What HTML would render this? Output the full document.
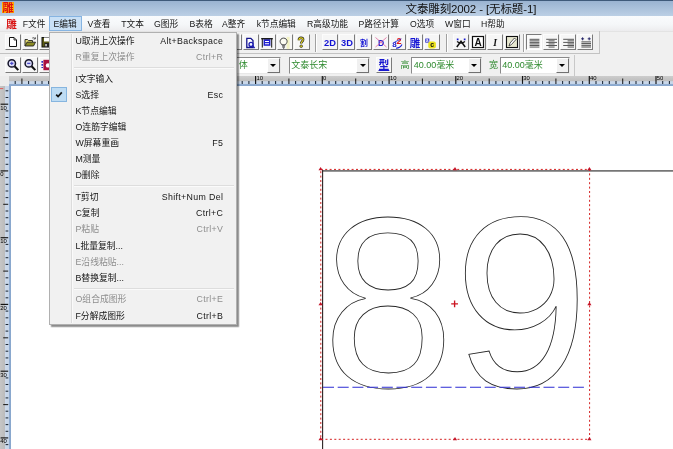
<!DOCTYPE html>
<html lang="zh-CN"><head><meta charset="utf-8"><title>文泰雕刻2002 - [无标题-1]</title>
<style>
html,body{margin:0;padding:0}
body{width:673px;height:449px;overflow:hidden;background:#fff;position:relative;font-family:"Liberation Sans","Noto Sans CJK SC",sans-serif;font-size:9px;color:#000;line-height:1}
div,span,svg{position:absolute;box-sizing:border-box}
.t{white-space:nowrap}
#title{left:0;top:0;width:673px;height:16px;background:linear-gradient(#9ab3d1 0,#a9c0da 45%,#bbcfe5 100%);border-top:1px solid #3f5a7a}
#title .cap{left:405.5px;top:1px;font-size:11.5px;line-height:15px;color:#111;letter-spacing:-0.12px}
#appico{left:2.2px;top:0.8px;width:11.6px;height:11.6px;background:radial-gradient(circle at 50% 50%,#ffd838 0,#ffb400 60%,#ff9c00 100%);color:#e01010;font-size:11px;line-height:12px;text-align:center;font-weight:bold;overflow:hidden}
#menubar{left:0;top:16px;width:673px;height:15.4px;background:linear-gradient(#f9fbfd 0,#f5f7f9 55%,#ececee 100%)}
#menubar .mi{top:1px;height:15px;line-height:15px;font-size:8.7px;color:#161616}
#menubar .hl{left:49.4px;top:0;width:32.8px;height:15px;background:#c9e0f6;border:1px solid #86b4e2}
#tb1{left:0;top:31px;width:673px;height:24px;background:#f0f0f0;border-top:1px solid #e3e3e3}
#tb2{left:0;top:55px;width:673px;height:21px;background:#f0f0f0}
.btn{width:16px;height:16px;border-right:1px solid #7b7b7b;border-bottom:1px solid #7b7b7b;border-top:1px solid #fcfcfc;border-left:1px solid #fcfcfc;background:#f6f6f6}
.btn.down{border-left:1px solid #7b7b7b;border-top:1px solid #7b7b7b;border-right:1px solid #fff;border-bottom:1px solid #fff;background:#fafafa}
.btn svg{left:0;top:0}
.sep{width:2px;border-left:1px solid #a0a0a0;border-right:1px solid #fff}
.combo{height:17px;background:#fff;border:1px solid #8a8a8a;border-right-color:#e8e8e8;border-bottom-color:#e8e8e8;color:#2e8a2e;font-size:9px;line-height:15px}
.combo .dd{right:0;top:0;width:13px;height:15px;background:#f0f0f0;border:1px solid #fff;border-right-color:#707070;border-bottom-color:#707070}
.combo .dd i{position:absolute;left:2.5px;top:5px;width:0;height:0;border-left:3px solid transparent;border-right:3px solid transparent;border-top:3.5px solid #000}
.combo .tx{left:1.8px;top:0}
.lbl{color:#2e8a2e;font-size:9px;line-height:17px}
#menu{left:49px;top:32px;width:188px;height:293px;background:#f1f1f1;border:1px solid #b0b0b0;box-shadow:2px 2px 1.2px rgba(0,0,0,.45)}
#menu .gut{left:21.2px;top:1px;width:1px;height:289px;background:#dcdcdc;border-right:1px solid #fafafa;width:2px}
#menu .it{left:25.5px;width:147.5px;height:16px;line-height:16px;font-size:8.8px;color:#161616}
#menu .it.dis{color:#8e8e8e}
#menu .it .sc{right:-0.3px;top:0;letter-spacing:0.36px}
#menu .it .lb{left:0;top:0}
#menu .ms{left:24px;width:160px;background:#dddddd;border-bottom:1px solid #fafafa;height:2px}
#menu .chk{left:1px;top:53.9px;width:16.4px;height:15.6px;background:#bedcf3;border:1px solid #86b5df}
#root{left:0;top:0;width:673px;height:449px;overflow:hidden;will-change:transform;background:#fff}
</style></head><body><div id="root">

<svg id="cv" width="673" height="449" viewBox="0 0 673 449" style="left:0;top:0">
<line x1="322" y1="170.8" x2="673" y2="170.8" stroke="#767676" stroke-width="1.7"/>
<line x1="322.6" y1="170" x2="322.6" y2="449" stroke="#2a2222" stroke-width="1.1"/>
<g font-family='"Liberation Sans",sans-serif' font-size="240" fill="none" stroke="#262626" stroke-width="0.85"><text transform="translate(322.55 386.8) scale(0.985 1.017)" x="0" y="0">8</text><text transform="translate(453.9 386.8) scale(1.009 1.017)" x="0" y="0">9</text></g>
<line x1="323" y1="387.2" x2="584" y2="387.2" stroke="#2c2cd4" stroke-width="1.1" stroke-dasharray="11 3.7"/>
<rect x="320.8" y="169.4" width="268.8" height="269.9" fill="none" stroke="#d42020" stroke-width="1" stroke-dasharray="2 2.4"/>
<path d="M320.6 167.1 l2.1 3.2 h-4.2 z" fill="#c41428"/>
<path d="M455 167.1 l2.1 3.2 h-4.2 z" fill="#c41428"/>
<path d="M589.4 167.1 l2.1 3.2 h-4.2 z" fill="#c41428"/>
<path d="M320.6 302.05 l2.1 3.2 h-4.2 z" fill="#c41428"/>
<path d="M589.4 302.05 l2.1 3.2 h-4.2 z" fill="#c41428"/>
<path d="M320.6 437 l2.1 3.2 h-4.2 z" fill="#c41428"/>
<path d="M455 437 l2.1 3.2 h-4.2 z" fill="#c41428"/>
<path d="M589.4 437 l2.1 3.2 h-4.2 z" fill="#c41428"/>
<path d="M451.2 303.9h6.8M454.6 300.5v6.8" stroke="#cc1420" stroke-width="1.35" fill="none"/>
</svg>
<div id="hr" style="left:9px;top:75px;width:664px;height:11.3px;background:linear-gradient(#cdcdcd 0,#bebebe 52%,#ccd9ea 56%,#c6d5e8 76%,#92aed2 82%,#86a5cc 100%);border-top:1px solid #e4e4e4"></div>
<div id="vr" style="left:0;top:86.3px;width:10.7px;height:363px;background:linear-gradient(90deg,#c6c6c6 0,#bcbcbc 42%,#ccd9ea 46%,#c6d5e8 78%,#92aed2 84%,#86a5cc 100%)"></div>
<div style="left:0;top:75px;width:9px;height:11.3px;background:#ececec"></div>
<svg width="673" height="449" viewBox="0 0 673 449" style="left:0;top:0" font-family='"Liberation Sans",sans-serif' font-size="6.6" fill="#111">
<line x1="15.2" y1="81.1" x2="15.2" y2="84" stroke="#1e2834" stroke-width="1.05"/>
<line x1="21.9" y1="78.6" x2="21.9" y2="83.9" stroke="#1c1c1c" stroke-width="1.05"/>
<line x1="28.6" y1="81.1" x2="28.6" y2="84" stroke="#1e2834" stroke-width="1.05"/>
<line x1="35.3" y1="81.1" x2="35.3" y2="84" stroke="#1e2834" stroke-width="1.05"/>
<line x1="42.0" y1="81.1" x2="42.0" y2="84" stroke="#1e2834" stroke-width="1.05"/>
<line x1="48.6" y1="81.1" x2="48.6" y2="84" stroke="#1e2834" stroke-width="1.05"/>
<line x1="55.3" y1="75.9" x2="55.3" y2="83.9" stroke="#141414" stroke-width="1.15"/>
<text x="56.1" y="80.2" font-size="5.9" fill="#000">40</text>
<line x1="62.0" y1="81.1" x2="62.0" y2="84" stroke="#1e2834" stroke-width="1.05"/>
<line x1="68.7" y1="81.1" x2="68.7" y2="84" stroke="#1e2834" stroke-width="1.05"/>
<line x1="75.3" y1="81.1" x2="75.3" y2="84" stroke="#1e2834" stroke-width="1.05"/>
<line x1="82.0" y1="81.1" x2="82.0" y2="84" stroke="#1e2834" stroke-width="1.05"/>
<line x1="88.7" y1="78.6" x2="88.7" y2="83.9" stroke="#1c1c1c" stroke-width="1.05"/>
<line x1="95.4" y1="81.1" x2="95.4" y2="84" stroke="#1e2834" stroke-width="1.05"/>
<line x1="102.0" y1="81.1" x2="102.0" y2="84" stroke="#1e2834" stroke-width="1.05"/>
<line x1="108.7" y1="81.1" x2="108.7" y2="84" stroke="#1e2834" stroke-width="1.05"/>
<line x1="115.4" y1="81.1" x2="115.4" y2="84" stroke="#1e2834" stroke-width="1.05"/>
<line x1="122.1" y1="75.9" x2="122.1" y2="83.9" stroke="#141414" stroke-width="1.15"/>
<text x="122.9" y="80.2" font-size="5.9" fill="#000">30</text>
<line x1="128.7" y1="81.1" x2="128.7" y2="84" stroke="#1e2834" stroke-width="1.05"/>
<line x1="135.4" y1="81.1" x2="135.4" y2="84" stroke="#1e2834" stroke-width="1.05"/>
<line x1="142.1" y1="81.1" x2="142.1" y2="84" stroke="#1e2834" stroke-width="1.05"/>
<line x1="148.8" y1="81.1" x2="148.8" y2="84" stroke="#1e2834" stroke-width="1.05"/>
<line x1="155.4" y1="78.6" x2="155.4" y2="83.9" stroke="#1c1c1c" stroke-width="1.05"/>
<line x1="162.1" y1="81.1" x2="162.1" y2="84" stroke="#1e2834" stroke-width="1.05"/>
<line x1="168.8" y1="81.1" x2="168.8" y2="84" stroke="#1e2834" stroke-width="1.05"/>
<line x1="175.5" y1="81.1" x2="175.5" y2="84" stroke="#1e2834" stroke-width="1.05"/>
<line x1="182.1" y1="81.1" x2="182.1" y2="84" stroke="#1e2834" stroke-width="1.05"/>
<line x1="188.8" y1="75.9" x2="188.8" y2="83.9" stroke="#141414" stroke-width="1.15"/>
<text x="189.6" y="80.2" font-size="5.9" fill="#000">20</text>
<line x1="195.5" y1="81.1" x2="195.5" y2="84" stroke="#1e2834" stroke-width="1.05"/>
<line x1="202.2" y1="81.1" x2="202.2" y2="84" stroke="#1e2834" stroke-width="1.05"/>
<line x1="208.8" y1="81.1" x2="208.8" y2="84" stroke="#1e2834" stroke-width="1.05"/>
<line x1="215.5" y1="81.1" x2="215.5" y2="84" stroke="#1e2834" stroke-width="1.05"/>
<line x1="222.2" y1="78.6" x2="222.2" y2="83.9" stroke="#1c1c1c" stroke-width="1.05"/>
<line x1="228.9" y1="81.1" x2="228.9" y2="84" stroke="#1e2834" stroke-width="1.05"/>
<line x1="235.5" y1="81.1" x2="235.5" y2="84" stroke="#1e2834" stroke-width="1.05"/>
<line x1="242.2" y1="81.1" x2="242.2" y2="84" stroke="#1e2834" stroke-width="1.05"/>
<line x1="248.9" y1="81.1" x2="248.9" y2="84" stroke="#1e2834" stroke-width="1.05"/>
<line x1="255.6" y1="75.9" x2="255.6" y2="83.9" stroke="#141414" stroke-width="1.15"/>
<text x="256.4" y="80.2" font-size="5.9" fill="#000">10</text>
<line x1="262.2" y1="81.1" x2="262.2" y2="84" stroke="#1e2834" stroke-width="1.05"/>
<line x1="268.9" y1="81.1" x2="268.9" y2="84" stroke="#1e2834" stroke-width="1.05"/>
<line x1="275.6" y1="81.1" x2="275.6" y2="84" stroke="#1e2834" stroke-width="1.05"/>
<line x1="282.2" y1="81.1" x2="282.2" y2="84" stroke="#1e2834" stroke-width="1.05"/>
<line x1="288.9" y1="78.6" x2="288.9" y2="83.9" stroke="#1c1c1c" stroke-width="1.05"/>
<line x1="295.6" y1="81.1" x2="295.6" y2="84" stroke="#1e2834" stroke-width="1.05"/>
<line x1="302.3" y1="81.1" x2="302.3" y2="84" stroke="#1e2834" stroke-width="1.05"/>
<line x1="308.9" y1="81.1" x2="308.9" y2="84" stroke="#1e2834" stroke-width="1.05"/>
<line x1="315.6" y1="81.1" x2="315.6" y2="84" stroke="#1e2834" stroke-width="1.05"/>
<line x1="322.3" y1="75.9" x2="322.3" y2="83.9" stroke="#141414" stroke-width="1.15"/>
<text x="323.1" y="80.2" font-size="5.9" fill="#000">0</text>
<line x1="329.0" y1="81.1" x2="329.0" y2="84" stroke="#1e2834" stroke-width="1.05"/>
<line x1="335.7" y1="81.1" x2="335.7" y2="84" stroke="#1e2834" stroke-width="1.05"/>
<line x1="342.3" y1="81.1" x2="342.3" y2="84" stroke="#1e2834" stroke-width="1.05"/>
<line x1="349.0" y1="81.1" x2="349.0" y2="84" stroke="#1e2834" stroke-width="1.05"/>
<line x1="355.7" y1="78.6" x2="355.7" y2="83.9" stroke="#1c1c1c" stroke-width="1.05"/>
<line x1="362.4" y1="81.1" x2="362.4" y2="84" stroke="#1e2834" stroke-width="1.05"/>
<line x1="369.0" y1="81.1" x2="369.0" y2="84" stroke="#1e2834" stroke-width="1.05"/>
<line x1="375.7" y1="81.1" x2="375.7" y2="84" stroke="#1e2834" stroke-width="1.05"/>
<line x1="382.4" y1="81.1" x2="382.4" y2="84" stroke="#1e2834" stroke-width="1.05"/>
<line x1="389.1" y1="75.9" x2="389.1" y2="83.9" stroke="#141414" stroke-width="1.15"/>
<text x="389.9" y="80.2" font-size="5.9" fill="#000">10</text>
<line x1="395.7" y1="81.1" x2="395.7" y2="84" stroke="#1e2834" stroke-width="1.05"/>
<line x1="402.4" y1="81.1" x2="402.4" y2="84" stroke="#1e2834" stroke-width="1.05"/>
<line x1="409.1" y1="81.1" x2="409.1" y2="84" stroke="#1e2834" stroke-width="1.05"/>
<line x1="415.8" y1="81.1" x2="415.8" y2="84" stroke="#1e2834" stroke-width="1.05"/>
<line x1="422.4" y1="78.6" x2="422.4" y2="83.9" stroke="#1c1c1c" stroke-width="1.05"/>
<line x1="429.1" y1="81.1" x2="429.1" y2="84" stroke="#1e2834" stroke-width="1.05"/>
<line x1="435.8" y1="81.1" x2="435.8" y2="84" stroke="#1e2834" stroke-width="1.05"/>
<line x1="442.4" y1="81.1" x2="442.4" y2="84" stroke="#1e2834" stroke-width="1.05"/>
<line x1="449.1" y1="81.1" x2="449.1" y2="84" stroke="#1e2834" stroke-width="1.05"/>
<line x1="455.8" y1="75.9" x2="455.8" y2="83.9" stroke="#141414" stroke-width="1.15"/>
<text x="456.6" y="80.2" font-size="5.9" fill="#000">20</text>
<line x1="462.5" y1="81.1" x2="462.5" y2="84" stroke="#1e2834" stroke-width="1.05"/>
<line x1="469.1" y1="81.1" x2="469.1" y2="84" stroke="#1e2834" stroke-width="1.05"/>
<line x1="475.8" y1="81.1" x2="475.8" y2="84" stroke="#1e2834" stroke-width="1.05"/>
<line x1="482.5" y1="81.1" x2="482.5" y2="84" stroke="#1e2834" stroke-width="1.05"/>
<line x1="489.2" y1="78.6" x2="489.2" y2="83.9" stroke="#1c1c1c" stroke-width="1.05"/>
<line x1="495.9" y1="81.1" x2="495.9" y2="84" stroke="#1e2834" stroke-width="1.05"/>
<line x1="502.5" y1="81.1" x2="502.5" y2="84" stroke="#1e2834" stroke-width="1.05"/>
<line x1="509.2" y1="81.1" x2="509.2" y2="84" stroke="#1e2834" stroke-width="1.05"/>
<line x1="515.9" y1="81.1" x2="515.9" y2="84" stroke="#1e2834" stroke-width="1.05"/>
<line x1="522.5" y1="75.9" x2="522.5" y2="83.9" stroke="#141414" stroke-width="1.15"/>
<text x="523.3" y="80.2" font-size="5.9" fill="#000">30</text>
<line x1="529.2" y1="81.1" x2="529.2" y2="84" stroke="#1e2834" stroke-width="1.05"/>
<line x1="535.9" y1="81.1" x2="535.9" y2="84" stroke="#1e2834" stroke-width="1.05"/>
<line x1="542.6" y1="81.1" x2="542.6" y2="84" stroke="#1e2834" stroke-width="1.05"/>
<line x1="549.2" y1="81.1" x2="549.2" y2="84" stroke="#1e2834" stroke-width="1.05"/>
<line x1="555.9" y1="78.6" x2="555.9" y2="83.9" stroke="#1c1c1c" stroke-width="1.05"/>
<line x1="562.6" y1="81.1" x2="562.6" y2="84" stroke="#1e2834" stroke-width="1.05"/>
<line x1="569.3" y1="81.1" x2="569.3" y2="84" stroke="#1e2834" stroke-width="1.05"/>
<line x1="576.0" y1="81.1" x2="576.0" y2="84" stroke="#1e2834" stroke-width="1.05"/>
<line x1="582.6" y1="81.1" x2="582.6" y2="84" stroke="#1e2834" stroke-width="1.05"/>
<line x1="589.3" y1="75.9" x2="589.3" y2="83.9" stroke="#141414" stroke-width="1.15"/>
<text x="590.1" y="80.2" font-size="5.9" fill="#000">40</text>
<line x1="596.0" y1="81.1" x2="596.0" y2="84" stroke="#1e2834" stroke-width="1.05"/>
<line x1="602.6" y1="81.1" x2="602.6" y2="84" stroke="#1e2834" stroke-width="1.05"/>
<line x1="609.3" y1="81.1" x2="609.3" y2="84" stroke="#1e2834" stroke-width="1.05"/>
<line x1="616.0" y1="81.1" x2="616.0" y2="84" stroke="#1e2834" stroke-width="1.05"/>
<line x1="622.7" y1="78.6" x2="622.7" y2="83.9" stroke="#1c1c1c" stroke-width="1.05"/>
<line x1="629.4" y1="81.1" x2="629.4" y2="84" stroke="#1e2834" stroke-width="1.05"/>
<line x1="636.0" y1="81.1" x2="636.0" y2="84" stroke="#1e2834" stroke-width="1.05"/>
<line x1="642.7" y1="81.1" x2="642.7" y2="84" stroke="#1e2834" stroke-width="1.05"/>
<line x1="649.4" y1="81.1" x2="649.4" y2="84" stroke="#1e2834" stroke-width="1.05"/>
<line x1="656.0" y1="75.9" x2="656.0" y2="83.9" stroke="#141414" stroke-width="1.15"/>
<text x="656.8" y="80.2" font-size="5.9" fill="#000">50</text>
<line x1="662.7" y1="81.1" x2="662.7" y2="84" stroke="#1e2834" stroke-width="1.05"/>
<line x1="669.4" y1="81.1" x2="669.4" y2="84" stroke="#1e2834" stroke-width="1.05"/>
<line x1="5.6" y1="90.8" x2="8.3" y2="90.8" stroke="#1e2834" stroke-width="1.05"/>
<line x1="5.6" y1="97.5" x2="8.3" y2="97.5" stroke="#1e2834" stroke-width="1.05"/>
<line x1="0.6" y1="104.2" x2="8.2" y2="104.2" stroke="#141414" stroke-width="1.15"/>
<text x="0.2" y="109.6" font-size="5.9" fill="#000">10</text>
<line x1="5.6" y1="110.9" x2="8.3" y2="110.9" stroke="#1e2834" stroke-width="1.05"/>
<line x1="5.6" y1="117.5" x2="8.3" y2="117.5" stroke="#1e2834" stroke-width="1.05"/>
<line x1="5.6" y1="124.2" x2="8.3" y2="124.2" stroke="#1e2834" stroke-width="1.05"/>
<line x1="5.6" y1="130.9" x2="8.3" y2="130.9" stroke="#1e2834" stroke-width="1.05"/>
<line x1="3.2" y1="137.6" x2="8.2" y2="137.6" stroke="#1c1c1c" stroke-width="1.05"/>
<line x1="5.6" y1="144.2" x2="8.3" y2="144.2" stroke="#1e2834" stroke-width="1.05"/>
<line x1="5.6" y1="150.9" x2="8.3" y2="150.9" stroke="#1e2834" stroke-width="1.05"/>
<line x1="5.6" y1="157.6" x2="8.3" y2="157.6" stroke="#1e2834" stroke-width="1.05"/>
<line x1="5.6" y1="164.3" x2="8.3" y2="164.3" stroke="#1e2834" stroke-width="1.05"/>
<line x1="0.6" y1="170.9" x2="8.2" y2="170.9" stroke="#141414" stroke-width="1.15"/>
<text x="0.2" y="176.3" font-size="5.9" fill="#000">0</text>
<line x1="5.6" y1="177.6" x2="8.3" y2="177.6" stroke="#1e2834" stroke-width="1.05"/>
<line x1="5.6" y1="184.3" x2="8.3" y2="184.3" stroke="#1e2834" stroke-width="1.05"/>
<line x1="5.6" y1="191.0" x2="8.3" y2="191.0" stroke="#1e2834" stroke-width="1.05"/>
<line x1="5.6" y1="197.6" x2="8.3" y2="197.6" stroke="#1e2834" stroke-width="1.05"/>
<line x1="3.2" y1="204.3" x2="8.2" y2="204.3" stroke="#1c1c1c" stroke-width="1.05"/>
<line x1="5.6" y1="211.0" x2="8.3" y2="211.0" stroke="#1e2834" stroke-width="1.05"/>
<line x1="5.6" y1="217.7" x2="8.3" y2="217.7" stroke="#1e2834" stroke-width="1.05"/>
<line x1="5.6" y1="224.3" x2="8.3" y2="224.3" stroke="#1e2834" stroke-width="1.05"/>
<line x1="5.6" y1="231.0" x2="8.3" y2="231.0" stroke="#1e2834" stroke-width="1.05"/>
<line x1="0.6" y1="237.7" x2="8.2" y2="237.7" stroke="#141414" stroke-width="1.15"/>
<text x="0.2" y="243.1" font-size="5.9" fill="#000">10</text>
<line x1="5.6" y1="244.4" x2="8.3" y2="244.4" stroke="#1e2834" stroke-width="1.05"/>
<line x1="5.6" y1="251.0" x2="8.3" y2="251.0" stroke="#1e2834" stroke-width="1.05"/>
<line x1="5.6" y1="257.7" x2="8.3" y2="257.7" stroke="#1e2834" stroke-width="1.05"/>
<line x1="5.6" y1="264.4" x2="8.3" y2="264.4" stroke="#1e2834" stroke-width="1.05"/>
<line x1="3.2" y1="271.1" x2="8.2" y2="271.1" stroke="#1c1c1c" stroke-width="1.05"/>
<line x1="5.6" y1="277.8" x2="8.3" y2="277.8" stroke="#1e2834" stroke-width="1.05"/>
<line x1="5.6" y1="284.4" x2="8.3" y2="284.4" stroke="#1e2834" stroke-width="1.05"/>
<line x1="5.6" y1="291.1" x2="8.3" y2="291.1" stroke="#1e2834" stroke-width="1.05"/>
<line x1="5.6" y1="297.8" x2="8.3" y2="297.8" stroke="#1e2834" stroke-width="1.05"/>
<line x1="0.6" y1="304.4" x2="8.2" y2="304.4" stroke="#141414" stroke-width="1.15"/>
<text x="0.2" y="309.8" font-size="5.9" fill="#000">20</text>
<line x1="5.6" y1="311.1" x2="8.3" y2="311.1" stroke="#1e2834" stroke-width="1.05"/>
<line x1="5.6" y1="317.8" x2="8.3" y2="317.8" stroke="#1e2834" stroke-width="1.05"/>
<line x1="5.6" y1="324.5" x2="8.3" y2="324.5" stroke="#1e2834" stroke-width="1.05"/>
<line x1="5.6" y1="331.1" x2="8.3" y2="331.1" stroke="#1e2834" stroke-width="1.05"/>
<line x1="3.2" y1="337.8" x2="8.2" y2="337.8" stroke="#1c1c1c" stroke-width="1.05"/>
<line x1="5.6" y1="344.5" x2="8.3" y2="344.5" stroke="#1e2834" stroke-width="1.05"/>
<line x1="5.6" y1="351.2" x2="8.3" y2="351.2" stroke="#1e2834" stroke-width="1.05"/>
<line x1="5.6" y1="357.9" x2="8.3" y2="357.9" stroke="#1e2834" stroke-width="1.05"/>
<line x1="5.6" y1="364.5" x2="8.3" y2="364.5" stroke="#1e2834" stroke-width="1.05"/>
<line x1="0.6" y1="371.2" x2="8.2" y2="371.2" stroke="#141414" stroke-width="1.15"/>
<text x="0.2" y="376.6" font-size="5.9" fill="#000">30</text>
<line x1="5.6" y1="377.9" x2="8.3" y2="377.9" stroke="#1e2834" stroke-width="1.05"/>
<line x1="5.6" y1="384.5" x2="8.3" y2="384.5" stroke="#1e2834" stroke-width="1.05"/>
<line x1="5.6" y1="391.2" x2="8.3" y2="391.2" stroke="#1e2834" stroke-width="1.05"/>
<line x1="5.6" y1="397.9" x2="8.3" y2="397.9" stroke="#1e2834" stroke-width="1.05"/>
<line x1="3.2" y1="404.6" x2="8.2" y2="404.6" stroke="#1c1c1c" stroke-width="1.05"/>
<line x1="5.6" y1="411.2" x2="8.3" y2="411.2" stroke="#1e2834" stroke-width="1.05"/>
<line x1="5.6" y1="417.9" x2="8.3" y2="417.9" stroke="#1e2834" stroke-width="1.05"/>
<line x1="5.6" y1="424.6" x2="8.3" y2="424.6" stroke="#1e2834" stroke-width="1.05"/>
<line x1="5.6" y1="431.3" x2="8.3" y2="431.3" stroke="#1e2834" stroke-width="1.05"/>
<line x1="0.6" y1="437.9" x2="8.2" y2="437.9" stroke="#141414" stroke-width="1.15"/>
<text x="0.2" y="443.3" font-size="5.9" fill="#000">40</text>
<line x1="5.6" y1="444.6" x2="8.3" y2="444.6" stroke="#1e2834" stroke-width="1.05"/>
<line x1="0" y1="88.6" x2="3.2" y2="88.6" stroke="#e05050" stroke-width="0.9"/>
</svg>
<div id="title"><div id="appico">雕</div><div class="cap t">文泰雕刻2002 - [无标题-1]</div></div>
<div id="menubar"><div class="hl"></div>
<div class="mi t" style="left:6.2px;color:#d81414;font-size:10.5px;font-weight:bold">雕</div>
<div class="mi t" id="m0" style="left:22.7px">F文件</div>
<div class="mi t" id="m1" style="left:53.5px">E编辑</div>
<div class="mi t" id="m2" style="left:87.4px">V查看</div>
<div class="mi t" id="m3" style="left:121.3px">T文本</div>
<div class="mi t" id="m4" style="left:154px">G图形</div>
<div class="mi t" id="m5" style="left:189.5px">B表格</div>
<div class="mi t" id="m6" style="left:222px">A整齐</div>
<div class="mi t" id="m7" style="left:256.7px">k节点编辑</div>
<div class="mi t" id="m8" style="left:307px">R高级功能</div>
<div class="mi t" id="m9" style="left:358.5px">P路径计算</div>
<div class="mi t" id="m10" style="left:410px">O选项</div>
<div class="mi t" id="m11" style="left:445px">W窗口</div>
<div class="mi t" id="m12" style="left:481px">H帮助</div>
</div>
<div id="tb1"></div>
<div style="left:0;top:31px;width:599.6px;height:23.4px;border-right:1px solid #c4c4c4;border-bottom:1.4px solid #c2c2c2"></div>
<div class="btn" style="left:5px;top:34px"><svg width="14" height="14" viewBox="0 0 14 14"><path d="M3.5 2.5h4.5l2.5 2.5v6.5h-7z" fill="#fff" stroke="#111" stroke-width="1"/><path d="M8 2.5v2.5h2.5" fill="none" stroke="#111" stroke-width="0.8"/></svg></div>
<div class="btn" style="left:22px;top:34px"><svg width="14" height="14" viewBox="0 0 14 14"><path d="M2 11v-6.5h2.5l1 1h4v1.5" fill="#e0d870" stroke="#222" stroke-width="0.9"/><path d="M2 11l2-3.8h8.5l-2 3.8z" fill="#8c8c24" stroke="#222" stroke-width="0.9"/><path d="M9.2 3.2c1-0.9 2.2-0.6 2.8 0.4M12.3 2.2v1.8h-1.8" fill="none" stroke="#222" stroke-width="0.7"/></svg></div>
<div class="btn" style="left:39px;top:34px"><svg width="14" height="14" viewBox="0 0 14 14"><rect x="2" y="2.5" width="10.5" height="9.5" fill="#5a5a14" stroke="#111" stroke-width="1"/><rect x="4" y="2.5" width="6.5" height="4" fill="#fff"/><rect x="4.5" y="8" width="5.5" height="4" fill="#222"/><rect x="5.3" y="9" width="1.5" height="2.3" fill="#ddd"/></svg></div>
<div class="btn" style="left:56px;top:34px"><svg width="14" height="14" viewBox="0 0 14 14"></svg></div>
<div class="btn" style="left:73px;top:34px"><svg width="14" height="14" viewBox="0 0 14 14"></svg></div>
<div class="btn" style="left:90px;top:34px"><svg width="14" height="14" viewBox="0 0 14 14"></svg></div>
<div class="btn" style="left:107px;top:34px"><svg width="14" height="14" viewBox="0 0 14 14"></svg></div>
<div class="btn" style="left:124px;top:34px"><svg width="14" height="14" viewBox="0 0 14 14"></svg></div>
<div class="btn" style="left:141px;top:34px"><svg width="14" height="14" viewBox="0 0 14 14"></svg></div>
<div class="btn" style="left:158px;top:34px"><svg width="14" height="14" viewBox="0 0 14 14"></svg></div>
<div class="btn" style="left:175px;top:34px"><svg width="14" height="14" viewBox="0 0 14 14"></svg></div>
<div class="btn" style="left:192px;top:34px"><svg width="14" height="14" viewBox="0 0 14 14"></svg></div>
<div class="btn" style="left:209px;top:34px"><svg width="14" height="14" viewBox="0 0 14 14"></svg></div>
<div class="btn" style="left:226px;top:34px"><svg width="14" height="14" viewBox="0 0 14 14"></svg></div>
<div class="btn" style="left:243px;top:34px"><svg width="14" height="14" viewBox="0 0 14 14"><g transform="translate(-1.2 0.8)"><path d="M4 2.5h4l2.2 2.2v7h-6.2z" fill="#fff" stroke="#14148c" stroke-width="1.3"/><circle cx="8.2" cy="8.6" r="2" fill="#f0f4ff" stroke="#1a1ab0" stroke-width="1.3"/><path d="M9.8 10.2l2 2" stroke="#1a1ab0" stroke-width="1.4"/></g></svg></div>
<div class="btn" style="left:260px;top:34px"><svg width="14" height="14" viewBox="0 0 14 14"><g transform="translate(-1 0.6)"><rect x="3.6" y="3.6" width="6.8" height="6.6" fill="#2020d0"/><path d="M5 5.9h4M5 8.1h4" stroke="#fff" stroke-width="1.1"/><path d="M2.3 3v9M11.7 3v9" stroke="#111" stroke-width="1"/><path d="M1.2 3.1h11.6" stroke="#111" stroke-width="1.3"/></g></svg></div>
<div class="btn" style="left:277px;top:34px"><svg width="14" height="14" viewBox="0 0 14 14"><g transform="translate(-0.9 0.9)"><rect x="9.5" y="1" width="3" height="12" fill="#f2f2c4"/><path d="M6.5 2.2c-2.2 0-3.5 1.6-3.5 3.3 0 1.5 1.1 2.2 1.7 3.4h3.6c0.6-1.2 1.7-1.9 1.7-3.4 0-1.7-1.3-3.3-3.5-3.3z" fill="#fcfcf2" stroke="#333" stroke-width="0.9"/><path d="M5 10h3M5.2 11.2h2.6M5.9 12.3h1.2" stroke="#333" stroke-width="0.9"/></g></svg></div>
<div class="btn" style="left:294px;top:34px"><svg width="14" height="14" viewBox="0 0 14 14"><g transform="translate(-1.1 0.2)"><path d="M5 5c0-1.6 0.9-2.4 2.1-2.4s2.1 0.8 2.1 2c0 1.5-1.9 1.7-1.9 3.6" fill="none" stroke="#222" stroke-width="2.5"/><path d="M5 5c0-1.6 0.9-2.4 2.1-2.4s2.1 0.8 2.1 2c0 1.5-1.9 1.7-1.9 3.6" fill="none" stroke="#e4d41c" stroke-width="1.2"/><circle cx="7.3" cy="11" r="1.3" fill="#e4d41c" stroke="#222" stroke-width="0.7"/></g></svg></div>
<div class="sep" style="left:315px;top:33.5px;height:18px"></div>
<div class="btn" style="left:321.6px;top:34px"><svg width="14" height="14" viewBox="0 0 14 14"><text x="7" y="11.2" text-anchor="middle" font-family='"Liberation Sans","Noto Sans CJK SC",sans-serif' font-size="9.3" font-weight="bold" fill="#1414d4">2D</text></svg></div>
<div class="btn" style="left:338.6px;top:34px"><svg width="14" height="14" viewBox="0 0 14 14"><text x="7" y="11.2" text-anchor="middle" font-family='"Liberation Sans","Noto Sans CJK SC",sans-serif' font-size="9.3" font-weight="bold" fill="#1414d4">3D</text></svg></div>
<div class="btn" style="left:355.6px;top:34px"><svg width="14" height="14" viewBox="0 0 14 14"><text x="7" y="11.2" text-anchor="middle" font-family='"Liberation Sans","Noto Sans CJK SC",sans-serif' font-size="7.8" font-weight="bold" fill="#1414d4">割</text></svg></div>
<div class="btn" style="left:372.6px;top:34px"><svg width="14" height="14" viewBox="0 0 14 14"><text x="7" y="11.4" text-anchor="middle" font-family='"Liberation Sans","Noto Sans CJK SC",sans-serif' font-size="8.6" font-weight="bold" fill="#1a1ad0">D</text><path d="M1.5 2.5l11 9.5M12.5 2.5l-11 9.5" stroke="#e05090" stroke-width="0.7"/></svg></div>
<div class="btn" style="left:389.6px;top:34px"><svg width="14" height="14" viewBox="0 0 14 14"><g transform="translate(0 0.8)"><text x="1.2" y="11.4" font-family="Liberation Sans,sans-serif" font-size="8" font-weight="bold" fill="#1a1ad0">8</text><text x="5.6" y="8.4" font-family="Liberation Sans,sans-serif" font-size="9" font-weight="bold" fill="#e01818">2</text><path d="M5 12.4c2.4 0 4.6-1 6-3.6" stroke="#1a1ad0" stroke-width="1.1" fill="none"/><path d="M3.4 6.4l7-3.4" stroke="#1a1ad0" stroke-width="0.8"/></g></svg></div>
<div class="btn" style="left:406.6px;top:34px"><svg width="14" height="14" viewBox="0 0 14 14"><text x="7" y="12" text-anchor="middle" font-family='"Liberation Sans","Noto Sans CJK SC",sans-serif' font-size="10.4" font-weight="bold" fill="#1414d4">雕</text></svg></div>
<div class="btn" style="left:423.6px;top:34px"><svg width="14" height="14" viewBox="0 0 14 14"><g transform="translate(-0.3 1)"><rect x="0.6" y="2.6" width="4" height="4" fill="#2222c8"/><text x="1.2" y="6" font-family="Liberation Sans,sans-serif" font-size="4.5" font-weight="bold" fill="#fff">a</text><rect x="3.6" y="5.4" width="7.6" height="7" rx="2" fill="#ece41c"/><text x="5.6" y="11.4" font-family="Liberation Sans,sans-serif" font-size="7" font-weight="bold" fill="#111">c</text></g></svg></div>
<div class="sep" style="left:445.6px;top:33.5px;height:18px"></div>
<div class="btn" style="left:452.6px;top:34px"><svg width="14" height="14" viewBox="0 0 14 14"><path d="M2.8 12L7 6.2 11.2 12" fill="none" stroke="#111" stroke-width="1.5"/><path d="M3 6.6Q7 9.6 11 6.6" fill="none" stroke="#111" stroke-width="1.2"/><path d="M2.8 3.6h1.7v1.7h-1.7zM9.8 3.6h1.7v1.7h-1.7z" fill="#1a1ad0"/></svg></div>
<div class="btn" style="left:469.6px;top:34px"><svg width="14" height="14" viewBox="0 0 14 14"><rect x="1.5" y="1.5" width="11" height="11" fill="#fff" stroke="#111" stroke-width="1.2"/><text x="7" y="11" text-anchor="middle" font-family="Liberation Sans,sans-serif" font-size="10" font-weight="bold" fill="#111">A</text></svg></div>
<div class="btn" style="left:486.6px;top:34px"><svg width="14" height="14" viewBox="0 0 14 14"><text x="7" y="10.6" text-anchor="middle" font-family="Liberation Serif,serif" font-size="9.6" font-weight="bold" font-style="italic" fill="#111">I</text></svg></div>
<div class="btn" style="left:503.6px;top:34px"><svg width="14" height="14" viewBox="0 0 14 14"><rect x="1.5" y="1.5" width="11" height="11" fill="#e8e8d0" stroke="#111" stroke-width="1.1"/><path d="M4 11l1-3 4.5-5 1.5 1.5-4.5 5z" fill="#fff" stroke="#333" stroke-width="0.8"/></svg></div>
<div class="sep" style="left:522.6px;top:33.5px;height:18px"></div>
<div class="btn down" style="left:526px;top:34px"><svg width="14" height="14" viewBox="0 0 14 14"><path d="M2.6 4.3H12.4M2.6 5.85H12.4M2.6 7.4H12.4M2.6 8.95H12.4M2.6 10.5H12.4M2.6 12.05H12.4" stroke="#4e4e4e" stroke-width="0.95" fill="none"/></svg></div>
<div class="btn" style="left:543px;top:34px"><svg width="14" height="14" viewBox="0 0 14 14"><path d="M2.2 4.3H13M4.6 5.85H10.6M2.2 7.4H13M4.6 8.95H10.6M2.2 10.5H13M4.6 12.05H10.6" stroke="#4e4e4e" stroke-width="0.95" fill="none"/></svg></div>
<div class="btn" style="left:560px;top:34px"><svg width="14" height="14" viewBox="0 0 14 14"><path d="M2.2 4.3H13M6.6 5.85H13M2.2 7.4H13M6.6 8.95H13M2.2 10.5H13M6.6 12.05H13" stroke="#4e4e4e" stroke-width="0.95" fill="none"/></svg></div>
<div class="btn" style="left:577px;top:34px"><svg width="14" height="14" viewBox="0 0 14 14"><path d="M3.4 6.9H13M3.4 8.6H13M3.4 10.3H13M3.4 12H13" stroke="#4e4e4e" stroke-width="1" fill="none"/><path d="M4.6 2.3v3M3.1 3.8h3M11.2 2.3v3M9.7 3.8h3" stroke="#1a1a60" stroke-width="0.9"/></svg></div>
<div id="tb2"></div>
<div style="left:0;top:55px;width:575px;height:21px;border-right:1px solid #c8c8c8"></div>
<div class="btn" style="left:5px;top:56.5px"><svg width="14" height="14" viewBox="0 0 14 14"><circle cx="5.8" cy="5.4" r="3.7" fill="#dcdcf6" stroke="#15152a" stroke-width="1.5"/><path d="M4.2 5.4h3.2M5.8 3.8v3.2" stroke="#4848c8" stroke-width="1.1"/><path d="M8.6 8.2l3.7 3.9" stroke="#111" stroke-width="2.1"/></svg></div>
<div class="btn" style="left:22px;top:56.5px"><svg width="14" height="14" viewBox="0 0 14 14"><circle cx="5.8" cy="5.4" r="3.7" fill="#dcdcf6" stroke="#15152a" stroke-width="1.5"/><path d="M4.2 5.4h3.2" stroke="#4848c8" stroke-width="1.3"/><path d="M8.6 8.2l3.7 3.9" stroke="#111" stroke-width="2.1"/></svg></div>
<div class="btn" style="left:39px;top:56.5px"><svg width="14" height="14" viewBox="0 0 14 14"><rect x="3.4" y="1.8" width="11" height="10.4" fill="#a81040"/><circle cx="8" cy="7.4" r="2.2" fill="#fff"/><path d="M2.2 3v7" stroke="#2020c0" stroke-width="1.5" stroke-dasharray="1.8 1.2"/><rect x="10.2" y="6.4" width="1.6" height="2.4" fill="#3838d0"/></svg></div>
<div class="combo" style="left:200px;top:56.5px;width:80.5px"><span class="tx t"><span style="left:36px;position:absolute">体</span></span><div class="dd"><i></i></div></div>
<div class="combo" style="left:288.5px;top:56.5px;width:81.5px"><span class="tx t">文泰长宋</span><div class="dd"><i></i></div></div>
<div class="btn" style="left:376px;top:56.5px"></div><div class="t" style="left:378.5px;top:58.5px;color:#1818d0;font-size:10.8px;line-height:12px;font-weight:bold;text-decoration:underline">型</div>
<div class="lbl t" style="left:400.5px;top:56.5px">高</div>
<div class="combo" style="left:411px;top:56.5px;width:70.5px"><span class="tx t">40.00毫米</span><div class="dd"><i></i></div></div>
<div class="lbl t" style="left:489px;top:56.5px">宽</div>
<div class="combo" style="left:499.5px;top:56.5px;width:70px"><span class="tx t">40.00毫米</span><div class="dd"><i></i></div></div>
<div id="menu"><div class="gut"></div><div class="chk"><svg width="14" height="14" viewBox="0 0 14 14"><path d="M4.2 6.6l1.9 2 3.7-4.2" fill="none" stroke="#111" stroke-width="1.7"/></svg></div>
<div class="it" style="top:-0.3px"><span class="lb t">U取消上次操作</span><span class="sc t">Alt+Backspace</span></div>
<div class="it dis" style="top:15.85px"><span class="lb t">R重复上次操作</span><span class="sc t">Ctrl+R</span></div>
<div class="ms" style="top:33.9px"></div>
<div class="it" style="top:37.5px"><span class="lb t">I文字输入</span><span class="sc t"></span></div>
<div class="it" style="top:53.65px"><span class="lb t">S选择</span><span class="sc t">Esc</span></div>
<div class="it" style="top:69.8px"><span class="lb t">K节点编辑</span><span class="sc t"></span></div>
<div class="it" style="top:85.95px"><span class="lb t">O连筋字编辑</span><span class="sc t"></span></div>
<div class="it" style="top:102.1px"><span class="lb t">W屏幕重画</span><span class="sc t">F5</span></div>
<div class="it" style="top:118.25px"><span class="lb t">M测量</span><span class="sc t"></span></div>
<div class="it" style="top:134.4px"><span class="lb t">D删除</span><span class="sc t"></span></div>
<div class="ms" style="top:152.45px"></div>
<div class="it" style="top:156.05px"><span class="lb t">T剪切</span><span class="sc t">Shift+Num Del</span></div>
<div class="it" style="top:172.2px"><span class="lb t">C复制</span><span class="sc t">Ctrl+C</span></div>
<div class="it dis" style="top:188.35px"><span class="lb t">P粘贴</span><span class="sc t">Ctrl+V</span></div>
<div class="it" style="top:204.5px"><span class="lb t">L批量复制...</span><span class="sc t"></span></div>
<div class="it dis" style="top:220.65px"><span class="lb t">E沿线粘贴...</span><span class="sc t"></span></div>
<div class="it" style="top:236.8px"><span class="lb t">B替换复制...</span><span class="sc t"></span></div>
<div class="ms" style="top:254.85px"></div>
<div class="it dis" style="top:258.45px"><span class="lb t">O组合成图形</span><span class="sc t">Ctrl+E</span></div>
<div class="it" style="top:274.6px"><span class="lb t">F分解成图形</span><span class="sc t">Ctrl+B</span></div>
</div>
</div></body></html>
